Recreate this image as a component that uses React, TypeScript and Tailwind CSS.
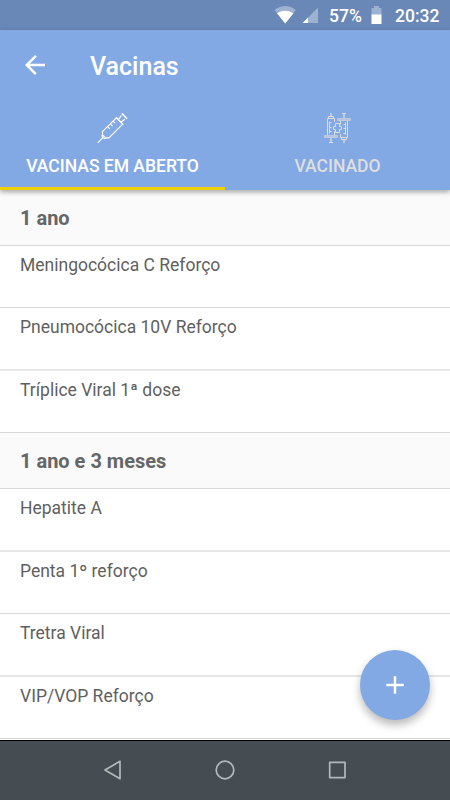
type Vaccine = { name: string; row: string };
type Group = { title: string; vaccines: Vaccine[] };

// Heights alternate because each row is 50dp at a 1.25 density.
const GROUPS: Group[] = [
  {
    title: "1 ano",
    vaccines: [
      { name: "Meningocócica C Reforço", row: "h-[62px] border-b border-[#d9d9d9]" },
      { name: "Pneumocócica 10V Reforço", row: "h-[63px] border-b-2 border-[#e6e6e6]" },
      { name: "Tríplice Viral 1ª dose", row: "h-[62px] border-b border-[#d9d9d9]" },
    ],
  },
  {
    title: "1 ano e 3 meses",
    vaccines: [
      { name: "Hepatite A", row: "h-[63px] border-b-2 border-[#e6e6e6]" },
      { name: "Penta 1º reforço", row: "h-[62px] border-b border-[#d9d9d9]" },
      { name: "Tretra Viral", row: "h-[63px] border-b-2 border-[#e6e6e6]" },
      { name: "VIP/VOP Reforço", row: "h-[62px] border-b border-[#d9d9d9]" },
    ],
  },
];

function StatusBar() {
  return (
    <div className="flex h-[30px] shrink-0 items-center bg-[#6987b7] text-[17.5px] font-medium text-white">
      <svg className="ml-[274px] shrink-0" width="23" height="30" viewBox="0 0 23 30">
        <path d="M.5 10Q11.2 2.2 21.9 10L11.2 23.4Z" fill="#fff" fillOpacity=".35" />
        <path d="M3 13.2Q11.2 8.4 19.4 13.2L11.2 23.4Z" fill="#fff" />
      </svg>
      <svg className="ml-[5px] shrink-0" width="17" height="30" viewBox="0 0 17 30">
        <path d="M.6 23L16 7.6V23Z" fill="#fff" fillOpacity=".35" />
        <path d="M.6 23L6 17.6V23Z" fill="#fff" />
      </svg>
      <span className="ml-[10px] w-[32px] whitespace-nowrap pt-px leading-[30px]">57%</span>
      <svg className="ml-[10px] shrink-0" width="11" height="30" viewBox="0 0 11 30">
        <path d="M3 6h5v2h2.5v7H.5V8H3Z" fill="#fff" fillOpacity=".35" />
        <path d="M.5 14.5h10V24H.5Z" fill="#fff" />
      </svg>
      <span className="ml-[13px] whitespace-nowrap pt-px leading-[30px]">20:32</span>
    </div>
  );
}

function SyringeIcon() {
  return (
    <svg width="31" height="30" viewBox="-0.5 0 31 30" fill="none" stroke="#fff" strokeWidth="1.1">
      <path d="M.3 29.7L5.6 24.4" />
      <path d="M5 21.4L4.4 23.2L6.8 25.6L8.6 25" />
      <path d="M5 21.8V18.6L18.9 4.8L25.2 11.1L11.4 24.9H8.2Z" />
      <path d="M10.2 13.6L12.4 15.8M12.9 10.9L15.1 13.1M15.6 8.2L17.8 10.4" />
      <path d="M18.4 4.2L25.8 11.6M21 6.4L23.8 2.6M23.6 9L27.4 6.2" />
      <path d="M24.3.4L29.6 5.7" strokeWidth="1.5" />
    </svg>
  );
}

function VaccinatedIcon() {
  const half = (
    <>
      <path d="M8.5 0V3" strokeWidth="1.8" strokeOpacity=".7" />
      <path d="M6 5.5V3.5H11V5.5M5 22V5.5H12V9M12 18.5V22" />
      <path d="M7 8.5V20.5M7 9.5H9M7 14.5H9M7 18.5H9" />
      <path d="M2 22.5H15V24.5H2Z" fill="#dedede" fillOpacity=".55" strokeOpacity=".5" />
      <path d="M8.5 25V29.5" strokeWidth="1.8" strokeOpacity=".7" />
      <path d="M6.5 29.5H10.5" />
    </>
  );
  return (
    <svg width="31" height="30" viewBox="-0.5 0 31 30" fill="none" stroke="#dedede" strokeWidth="1">
      {half}
      <g transform="rotate(180 15 15)">{half}</g>
      <path d="M13 10.5H17V13.5H19V16.5H17V19.5H13V16.5H11V13.5H13Z" />
    </svg>
  );
}

function Header() {
  return (
    <header className="relative z-10 shrink-0 bg-[#83a9e5] shadow-[0_2px_5px_rgba(0,0,0,0.35)]">
      <div className="flex h-[70px] items-center pl-5">
        <svg width="30" height="30" viewBox="0 0 24 24" fill="#fff">
          <path d="M20 11H7.83l5.59-5.59L12 4l-8 8 8 8 1.41-1.41L7.83 13H20v-2z" />
        </svg>
        <h1 className="ml-10 pt-[3px] text-[25px] font-medium leading-[30px] text-white">Vacinas</h1>
      </div>
      <div className="grid h-[90px] grid-cols-2 text-[17.5px] font-medium leading-5">
        <div className="flex flex-col items-center border-b-[3px] border-[#f0d000] pt-[13px] text-white">
          <SyringeIcon />
          <span className="mt-[13px]">VACINAS EM ABERTO</span>
        </div>
        <div className="flex flex-col items-center pt-[13px] text-[#dedede]">
          <VaccinatedIcon />
          <span className="mt-[13px]">VACINADO</span>
        </div>
      </div>
    </header>
  );
}

function VaccineGroup({ group }: { group: Group }) {
  return (
    <section>
      <h2 className="flex h-[56px] items-center border-b border-[#d9d9d9] bg-[#fafafa] pl-5 text-[20px] font-bold text-[#666]">
        {group.title}
      </h2>
      {group.vaccines.map((v) => (
        <div key={v.name} className={`bg-white pl-5 pt-[9px] text-[17.5px] leading-5 text-[#5f5f5f] ${v.row}`}>
          {v.name}
        </div>
      ))}
    </section>
  );
}

function NavBar() {
  return (
    <nav className="grid h-[60px] shrink-0 grid-cols-[1fr_112px_1fr] items-center border-t border-black bg-[#454d52] pb-[2px]">
      <svg className="ml-auto mr-[46px]" width="20" height="22" viewBox="0 0 20 22" fill="none" stroke="#b4b8ba" strokeWidth="1.7" strokeLinejoin="round">
        <path d="M2 11L17 2.3V19.7Z" />
      </svg>
      <svg className="mx-auto" width="22" height="22" viewBox="0 0 22 22" fill="none" stroke="#b4b8ba" strokeWidth="1.7">
        <circle cx="11" cy="11" r="8.8" />
      </svg>
      <svg className="ml-[46px]" width="20" height="20" viewBox="0 0 20 20" fill="none" stroke="#b4b8ba" strokeWidth="1.7" strokeLinejoin="round">
        <path d="M2.7 2.3H18V17.6H2.7Z" />
      </svg>
    </nav>
  );
}

export default function App() {
  return (
    <div className="relative flex h-[800px] w-[450px] flex-col overflow-hidden bg-white font-['Roboto',sans-serif]">
      <StatusBar />
      <Header />
      <main className="flex-1 overflow-hidden">
        {GROUPS.map((group) => (
          <VaccineGroup key={group.title} group={group} />
        ))}
      </main>
      <NavBar />
      <button className="absolute bottom-20 right-5 z-20 flex size-[70px] items-center justify-center rounded-full bg-[#82a9e4] shadow-[0_5px_9px_rgba(0,0,0,0.28)]">
        <svg width="30" height="30" viewBox="0 0 24 24" fill="#fff">
          <path d="M19 13h-6v6h-2v-6H5v-2h6V5h2v6h6v2z" />
        </svg>
      </button>
    </div>
  );
}
